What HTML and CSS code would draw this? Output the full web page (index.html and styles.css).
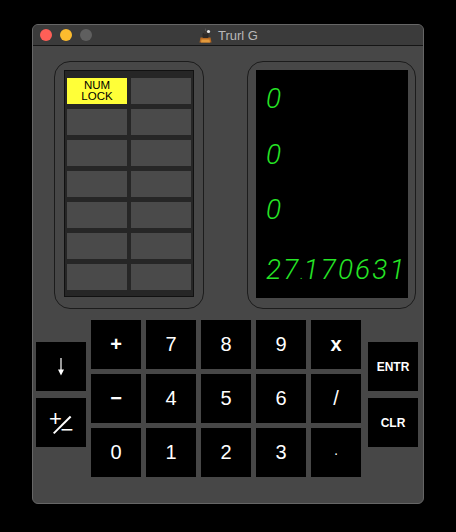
FILE: index.html
```html
<!DOCTYPE html>
<html lang="en">
<head>
<meta charset="utf-8">
<title>Trurl G</title>
<link rel="stylesheet" href="styles.css">
</head>
<body>
<div class="window">
  <div class="titlebar">
    <div class="lights">
      <span class="light red"></span>
      <span class="light yellow"></span>
      <span class="light gray"></span>
    </div>
    <div class="title">
      <svg class="app-icon" width="15" height="15" viewBox="0 0 15 15">
        <polygon points="1.5,14.5 13.5,14.5 12.5,9.5 2.5,9.5" fill="#b86a22"/>
        <polygon points="3,14.5 12,14.5 11.5,11.5 3.5,11.5" fill="#e39a3c"/>
        <rect x="4.5" y="5" width="6" height="5" rx="1" fill="#2e2a28"/>
        <rect x="6" y="3" width="3" height="3" fill="#3a3634"/>
        <circle cx="10.5" cy="3.5" r="1.6" fill="#e8e8e8"/>
        <line x1="7.5" y1="0.5" x2="7.5" y2="3" stroke="#555" stroke-width="1"/>
      </svg>
      <span>Trurl G</span>
    </div>
    <div></div>
  </div>

  <div class="content">
    <div class="top">
      <div class="panel left-panel">
        <div class="keys">
          <div class="key on">NUM<br>LOCK</div>
          <div class="key"></div>
          <div class="key"></div>
          <div class="key"></div>
          <div class="key"></div>
          <div class="key"></div>
          <div class="key"></div>
          <div class="key"></div>
          <div class="key"></div>
          <div class="key"></div>
          <div class="key"></div>
          <div class="key"></div>
          <div class="key"></div>
          <div class="key"></div>
        </div>
      </div>
      <div class="panel right-panel">
        <div class="display">
          <div class="reg">0</div>
          <div class="reg r2">0</div>
          <div class="reg r3">0</div>
          <div class="reg r4">27<span class="dp">.</span>170631</div>
        </div>
      </div>
    </div>

    <div class="pad">
      <div class="side">
        <div class="btn">
          <svg class="arrow" width="8" height="18" viewBox="0 0 8 18">
            <line x1="4" y1="0" x2="4" y2="12" stroke="#fff" stroke-width="1.2"/>
            <polygon points="1,11.5 7,11.5 4,17.5" fill="#fff"/>
          </svg>
        </div>
        <div class="btn">
          <span class="pm"><span class="pm-p">+</span><span class="pm-s"></span><span class="pm-m">−</span></span>
        </div>
      </div>
      <div class="grid">
        <div class="btn b">+</div>
        <div class="btn">7</div>
        <div class="btn">8</div>
        <div class="btn">9</div>
        <div class="btn b">x</div>
        <div class="btn b">−</div>
        <div class="btn">4</div>
        <div class="btn">5</div>
        <div class="btn">6</div>
        <div class="btn">/</div>
        <div class="btn">0</div>
        <div class="btn">1</div>
        <div class="btn">2</div>
        <div class="btn">3</div>
        <div class="btn dot">·</div>
      </div>
      <div class="side right">
        <div class="btn sm">ENTR</div>
        <div class="btn sm">CLR</div>
      </div>
    </div>
  </div>
</div>
</body>
</html>
```

FILE: styles.css
```css
* { box-sizing: border-box; }

html, body { margin: 0; padding: 0; }

body {
  background: #000;
  width: 456px;
  height: 532px;
  overflow: hidden;
  font-family: "Liberation Sans", Arial, sans-serif;
}

.window {
  margin: 24px 0 0 32px;
  width: 392px;
  height: 480px;
  border: 1px solid #666;
  border-radius: 6px;
  background: #474747;
  overflow: hidden;
}

.titlebar {
  height: 21px;
  display: grid;
  grid-template-columns: 1fr auto 1fr;
  align-items: center;
  background: #3b3b3b;
  border-bottom: 1px solid #151515;
}

.lights {
  display: flex;
  gap: 8px;
  padding-left: 7px;
}

.light {
  width: 12px;
  height: 12px;
  border-radius: 50%;
}
.red { background: #fe5f57; }
.yellow { background: #fdbc2e; }
.gray { background: #5f5f5f; }

.title {
  display: flex;
  align-items: center;
  gap: 5px;
  color: #b8b8b8;
  font-size: 13px;
}

.app-icon { display: block; }

/* top section */
.top {
  display: flex;
  gap: 43px;
  padding: 15px 0 0 21px;
}

.panel {
  height: 248px;
  border: 1px solid #1c1c1c;
  border-radius: 16px;
}

.left-panel {
  width: 150px;
  padding: 8px 9px;
}

.right-panel {
  width: 169px;
  padding: 8px;
}

.keys {
  width: 130px;
  height: 227px;
  border: 1px solid #111;
  background: #262626;
  padding: 7px 2px 6px 2px;
  display: grid;
  grid-template-columns: 60px 60px;
  grid-auto-rows: 26px;
  column-gap: 4px;
  row-gap: 5px;
}

.key {
  background: #4a4a4a;
}

.key.on {
  background: #ffff38;
  color: #000;
  font-size: 11.5px;
  line-height: 11px;
  text-align: center;
  display: flex;
  align-items: center;
  justify-content: center;
}

.display {
  width: 152px;
  height: 228px;
  background: #000;
  padding: 15px 0 0 10px;
}

.reg {
  height: 28px;
  line-height: 28px;
  font-family: Roboto, "DejaVu Sans", sans-serif;
  font-weight: 300;
  font-style: italic;
  font-size: 28px;
  letter-spacing: 2.1px;
  color: #26e626;
  white-space: nowrap;
}
.reg.r2 { margin-top: 28px; }
.reg.r3 { margin-top: 27px; }
.reg.r4 { margin-top: 32px; }

.dp {
  font-size: 14px;
  letter-spacing: 0;
}

/* keypad */
.pad {
  display: flex;
  padding: 11px 0 0 3px;
}

.side {
  display: flex;
  flex-direction: column;
  gap: 7px;
  margin: 22px 5px 0 0;
}

.side.right {
  margin: 22px 0 0 7px;
}

.grid {
  display: grid;
  grid-template-columns: repeat(5, 50px);
  grid-auto-rows: 49px;
  gap: 5px;
}

.btn {
  width: 50px;
  height: 49px;
  background: #000;
  color: #fff;
  display: flex;
  align-items: center;
  justify-content: center;
  font-size: 20px;
}

.btn.b { font-weight: bold; }

.btn.sm {
  font-size: 12px;
  font-weight: bold;
}

.btn.dot { font-size: 14px; }

.arrow { display: block; }

.pm {
  position: relative;
  width: 24px;
  height: 22px;
  display: block;
}

.pm-p, .pm-m {
  position: absolute;
  width: 13px;
  height: 13px;
  line-height: 13px;
  text-align: center;
  font-size: 22px;
}

.pm-p { left: 0; top: 0; }
.pm-m { left: 11.5px; top: 11px; }

.pm-s {
  position: absolute;
  left: 0.5px;
  top: 12.25px;
  width: 24px;
  height: 1.5px;
  background: #fff;
  transform: rotate(-45deg);
}
```
